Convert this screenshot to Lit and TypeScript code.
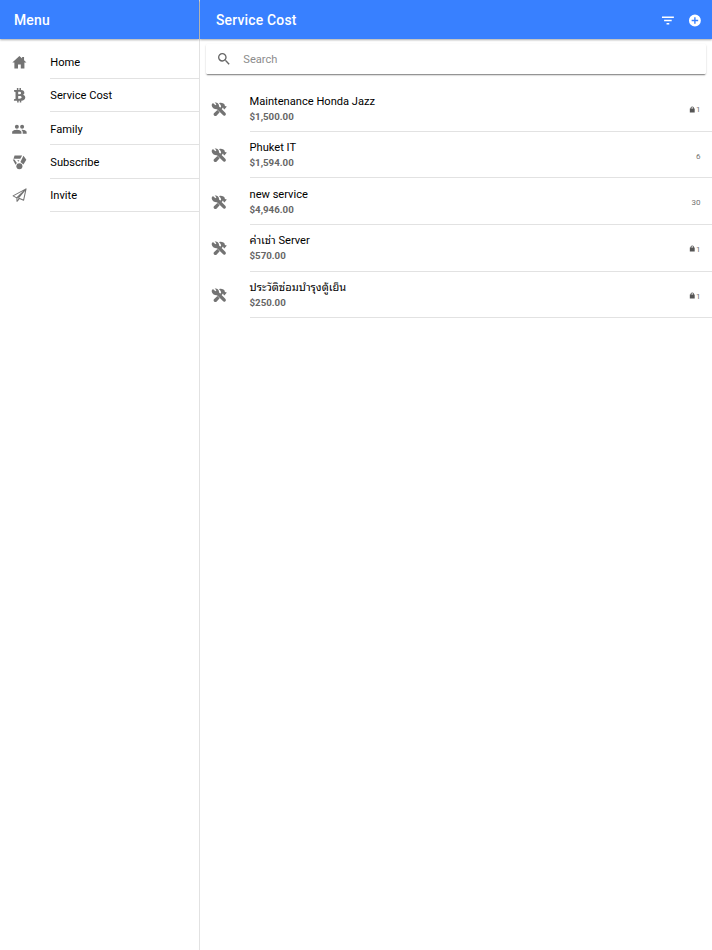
import { LitElement, html, css, svg, nothing } from "lit";
import { customElement } from "lit/decorators.js";

const icons = {
  home: svg`<path d="M12 1.500 .3 12.400h3.400V22.500h6V15.600h4.600v6.900h6V12.400h3.400L19.700 8.600V3.500h-3.200v2.200z"/>`,
  bitcoin: svg`<path fill-rule="evenodd" d="M3.200 3.200h4.600V0h2.500v3.200h1.800V0h2.500v3.200c3.800.3 5.600 1.900 5.600 4.600 0 1.700-.8 2.900-2.300 3.500 2.600.6 3.800 2.200 3.800 4.500 0 3.400-2.400 5-6.600 5.200V24h-2.500v-3h-1.800v3H8.300v-3H2.800l.6-2.700h1.200c.7 0 1-.3 1-.9V7c0-.7-.4-1-1.100-1H3.200zM10 6.200v4.200h1.300c2.400 0 3.500-.6 3.500-2.100 0-1.400-1.100-2.100-3.500-2.100zm0 7v4.700h1.700c2.700 0 3.900-.7 3.900-2.400 0-1.600-1.200-2.300-3.900-2.300z"/>`,
  people: svg`<path d="M16.500 11a3.300 3.300 0 1 0 0-6.600 3.300 3.300 0 0 0 0 6.600zm-8.700 0a3.300 3.300 0 1 0 0-6.600 3.300 3.300 0 0 0 0 6.600zm0 2C5.200 13 0 14.200 0 16.800V19.500h15.400v-2.700c0-2.600-5.100-3.800-7.600-3.800zm8.700 0-1.200.1c1.300.9 2.200 2.100 2.200 3.700v2.700H24v-2.700c0-2.600-5-3.800-7.500-3.800z"/>`,
  medal: svg`<path d="M4 1h12.500l-3 5H2.200zM1 7.500h2.800l4 5.800L5.600 16zM18.700 1.200 23.500 7.800l-4.800 8-5-4.200zM8.500 8.500h3.500l-1.700 2.700z"/><circle cx="12" cy="18.500" r="5"/>`,
  plane: svg`<path d="M23 1.500 1.500 13l6 3.300zM23 1.500 8 16.300V22l3.600-4M23 1.500l-4 18.700-8.500-3.600z" fill="none" stroke="currentColor" stroke-width="1.700" stroke-linejoin="round"/>`,
  search: svg`<path d="M15.500 14h-.79l-.28-.27A6.471 6.471 0 0 0 16 9.500 6.500 6.500 0 1 0 9.500 16c1.610 0 3.090-.59 4.230-1.570l.27.280v.79l5 4.990L20.490 19l-4.990-5zm-6 0C7.010 14 5 11.990 5 9.500S7.010 5 9.500 5 14 7.010 14 9.500 11.990 14 9.500 14z"/>`,
  filter: svg`<path d="M1 4.500h22v2.800H1zM5 10.600h14v2.800H5zM9.500 16.700h5v2.800h-5z"/>`,
  add: svg`<path fill-rule="evenodd" d="M12 1a11 11 0 1 0 0 22 11 11 0 0 0 0-22zm-1.300 5h2.600v4.700H18v2.600h-4.700V18h-2.600v-4.700H6v-2.600h4.700z"/>`,
  tools: svg`<path d="M3 2.200 6 5.300 7.600 3.700 4.800.9C8.600.1 12.100 3 11.900 7l9.900 10c1.300 1.300 1.300 2.900.2 4-1.100 1.200-2.900 1.200-4-.1L8.500 11.400C4.300 12.500 0 8.600.1 4.900.1 2.700 1.700 1 3 2.200z"/><path d="m9.200 12.700 3.600 3.600-4.700 5.100c-1.200 1.300-2.900 1.400-4.100.2-1.200-1.200-1.200-3 .1-4.200zM13.200 9.700l2-2.300c-.3-2.300-1-3.600-3.500-5.500 3.300-1.700 6.500-.6 9.200 2.300l.2 2.300.9.400 1-.7 1 1.500-3.700 4.300-1.600-1.500.2-1-.8-.6-2.300 2.500z"/>`,
  lock: svg`<path fill-rule="evenodd" d="M21 8h-2.500V7a6.500 6.500 0 0 0-13 0v1H3v15h18zM8.700 7a3.300 3.300 0 0 1 6.600 0v1H8.700z"/>`,
};

type IconName = keyof typeof icons;

const icon = (name: IconName, cls = "") =>
  html`<svg class="icon ${cls}" viewBox="0 0 24 24" fill="currentColor" aria-hidden="true">${icons[name]}</svg>`;

const menu: { icon: IconName; label: string }[] = [
  { icon: "home", label: "Home" },
  { icon: "bitcoin", label: "Service Cost" },
  { icon: "people", label: "Family" },
  { icon: "medal", label: "Subscribe" },
  { icon: "plane", label: "Invite" },
];

const services = [
  { name: "Maintenance Honda Jazz", cost: "$1,500.00", count: 1, locked: true },
  { name: "Phuket IT", cost: "$1,594.00", count: 6, locked: false },
  { name: "new service", cost: "$4,946.00", count: 30, locked: false },
  { name: "ค่าเช่า Server", cost: "$570.00", count: 1, locked: true },
  { name: "ประวัติซ่อมบำรุงตู้เย็น", cost: "$250.00", count: 1, locked: true },
];

@customElement("app-root")
export class AppRoot extends LitElement {
  static styles = css`
    :host {
      display: grid;
      grid-template-columns: 200px 1fr;
      height: 100vh;
      overflow: hidden;
      background: #fff;
      color: #000;
      font-family: Roboto, "Noto Sans Thai Looped", Loma, Garuda, Waree, "Noto Sans Thai", "Noto Sans", sans-serif;
      font-size: 11.12px;
    }
    * { box-sizing: border-box; }
    .icon { display: block; flex: none; width: 16.7px; height: 16.7px; }
    .side { border-right: 1px solid #e2e2e2; }
    .bar {
      height: 39px;
      display: flex;
      align-items: center;
      background: #3880ff;
      color: #fff;
      box-shadow: 0 1px 2px rgba(0, 0, 0, 0.34);
      font-size: 13.9px;
      font-weight: 500;
      letter-spacing: 0.2px;
      padding: 1px 10px 0 14px;
    }
    .main .bar { padding-left: 16px; }
    .title { flex: 1; }
    .filter { width: 13px; height: 13px; margin-right: 14px; }
    .add { width: 13px; height: 13px; margin-right: 1px; }
    .bar .icon { transform: translateX(0.4px); }
    .menu { padding-top: 6.2px; }
    .entry {
      display: flex;
      height: 33.38px;
      align-items: stretch;
    }
    .glyph {
      width: 50.3px;
      padding: 0.500px 0 0 12.200px;
      display: flex;
      align-items: center;
      color: #737373;
    }
    .glyph .icon { width: 14.800px; height: 14.500px; }
    .label {
      flex: 1;
      display: flex;
      align-items: center;
      border-bottom: 1px solid #e2e2e2;
      padding-top: 2px;
    }
    .search {
      height: 30px;
      margin: 5px 6px 0 5.500px;
      display: flex;
      align-items: center;
      border-radius: 1.500px;
      background: #fff;
      box-shadow: 0 1.500px 1.500px -1px rgba(0, 0, 0, 0.4), 0 1px 2px rgba(0, 0, 0, 0.2);
      padding-left: 10.500px;
      color: #8c8c8c;
    }
    .search .icon { width: 16px; height: 16px; margin-right: 11.300px; color: #666; }
    .list { padding-top: 11.300px; }
    .service { display: flex; height: 46.570px; }
    .service .glyph { width: 49.500px; padding: 1px 0 0 10.800px; }
    .service .glyph .icon { width: 16.300px; height: 15px; }
    .body {
      flex: 1;
      display: flex;
      align-items: center;
      border-bottom: 1px solid #e2e2e2;
      padding-right: 11.500px;
    }
    .text { flex: 1; padding-top: 0.900px; }
    .name { height: 15px; line-height: 15.600px; white-space: nowrap; }
    .cost { line-height: 15px; font-size: 9.730px; font-weight: 700; color: #666; }
    .note { display: flex; align-items: center; gap: 1px; padding-top: 3.400px; font-size: 8px; color: #737373; }
    .note .icon { width: 6.500px; height: 7.200px; color: #555; margin-bottom: 1px; }
  `;

  render() {
    return html`
      <nav class="side">
        <header class="bar">Menu</header>
        <div class="menu">
          ${menu.map(
            (m) => html`<div class="entry">
              <span class="glyph">${icon(m.icon)}</span>
              <span class="label">${m.label}</span>
            </div>`
          )}
        </div>
      </nav>
      <main class="main">
        <header class="bar">
          <span class="title">Service Cost</span>
          ${icon("filter", "filter")}${icon("add", "add")}
        </header>
        <div class="search">${icon("search")}<span>Search</span></div>
        <div class="list">
          ${services.map(
            (s) => html`<div class="service">
              <span class="glyph">${icon("tools")}</span>
              <div class="body">
                <div class="text">
                  <div class="name">${s.name}</div>
                  <div class="cost">${s.cost}</div>
                </div>
                <div class="note">${s.locked ? icon("lock") : nothing}<span>${s.count}</span></div>
              </div>
            </div>`
          )}
        </div>
      </main>
    `;
  }
}
